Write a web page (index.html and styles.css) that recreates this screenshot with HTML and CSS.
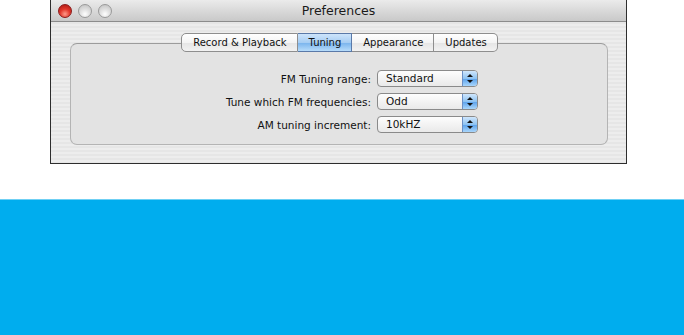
FILE: index.html
```html
<!DOCTYPE html>
<html lang="en">
<head>
  <meta charset="UTF-8">
  <title>Preferences</title>
  <link rel="stylesheet" href="styles.css">
</head>
<body>

  <div class="window">
    <div class="titlebar">
      <div class="lights">
        <span class="light close"></span>
        <span class="light"></span>
        <span class="light"></span>
      </div>
      <div class="title">Preferences</div>
      <div></div>
    </div>

    <div class="content">
      <div class="tabs">
        <span class="tab">Record &amp; Playback</span>
        <span class="tab selected">Tuning</span>
        <span class="tab">Appearance</span>
        <span class="tab">Updates</span>
      </div>

      <div class="group">
        <div class="form">
          <label>FM Tuning range:</label>
          <div class="popup">Standard<span class="arrows"></span></div>
          <label>Tune which FM frequencies:</label>
          <div class="popup">Odd<span class="arrows"></span></div>
          <label>AM tuning increment:</label>
          <div class="popup">10kHZ<span class="arrows"></span></div>
        </div>
      </div>
    </div>
  </div>

  <div class="band"></div>

</body>
</html>
```

FILE: styles.css
```css
body {
  margin: 0;
  background: white;
  font-family: "Lucida Grande", "DejaVu Sans", sans-serif;
  height: 335px;
  overflow: hidden;
}

.window {
  margin-left: 50px;
  width: 575px;
  border: 1px solid #2e2e2e;
  border-top: none;
  background: repeating-linear-gradient(#ededed 0 2px, #e6e6e6 2px 4px);
}

/* title bar */
.titlebar {
  height: 21px;
  display: grid;
  grid-template-columns: 1fr auto 1fr;
  align-items: center;
  background: linear-gradient(#ebebeb, #d6d6d6 60%, #c9c9c9);
  border-bottom: 1px solid #8c8c8c;
}

.lights {
  display: flex;
  gap: 6px;
  padding-left: 7px;
}

.light {
  width: 12px;
  height: 12px;
  border-radius: 50%;
  border: 1px solid #9a9a9a;
  background: radial-gradient(circle at 50% 75%, #ffffff 0, #e6e6e6 35%, #bdbdbd 100%);
}

.light.close {
  border-color: #8a1a1a;
  background: radial-gradient(circle at 50% 75%, #ff9a8a 0, #e2382c 45%, #a51410 100%);
}

.title {
  font-size: 12.5px;
  color: #1a1a1a;
}

/* tabs + group box */
.content {
  padding: 11px 18px 18px 19px;
}

.tabs {
  position: relative;
  display: flex;
  justify-content: center;
  margin-bottom: -9px;
  padding-left: 1px;
}

.tab {
  height: 17px;
  line-height: 17px;
  font-size: 10px;
  color: #111;
  padding: 0 10px 0 11px;
  border: 1px solid #8e8e8e;
  border-left: none;
  background: linear-gradient(#ffffff, #f4f4f4 50%, #e6e6e6 55%, #f2f2f2);
}

.tab:first-child {
  border-left: 1px solid #8e8e8e;
  border-radius: 5px 0 0 5px;
}

.tab:last-child {
  border-radius: 0 5px 5px 0;
}

.tab.selected {
  border-color: #5a79a8;
  background: linear-gradient(#cde4fb, #a6cdf3 50%, #7db6ee 55%, #b7dcfa);
}

.group {
  height: 74px;
  padding: 26px 0 0;
  border: 1px solid #b4b4b4;
  border-top-color: #9c9c9c;
  border-radius: 7px;
  background: #e3e3e3;
}

.form {
  display: grid;
  grid-template-columns: 1fr 101px;
  column-gap: 6px;
  row-gap: 6px;
  padding-right: 129px;
  align-items: center;
}

.form label {
  text-align: right;
  font-size: 10.5px;
  color: #111;
}

.popup {
  position: relative;
  height: 15px;
  line-height: 15px;
  padding-left: 8px;
  font-size: 10.5px;
  color: #111;
  border: 1px solid #8a8a8a;
  border-radius: 4px;
  background: linear-gradient(#fdfdfd, #f3f3f3 50%, #e9e9e9);
  overflow: hidden;
}

.arrows {
  position: absolute;
  top: 0;
  right: 0;
  width: 14px;
  height: 15px;
  border-left: 1px solid #6b8fc4;
  background: linear-gradient(#cfe6fc, #8ec3f2 50%, #5fa4ec 55%, #a9d6fb);
}

.arrows::before,
.arrows::after {
  content: "";
  position: absolute;
  left: 4px;
  border-left: 3px solid transparent;
  border-right: 3px solid transparent;
}

.arrows::before {
  top: 3px;
  border-bottom: 3px solid #111;
}

.arrows::after {
  bottom: 3px;
  border-top: 3px solid #111;
}

/* blue band under the window */
.band {
  margin-top: 35px;
  height: 135px;
  background: #00adee;
  border-top: 1px solid #6fd0f4;
}
```
